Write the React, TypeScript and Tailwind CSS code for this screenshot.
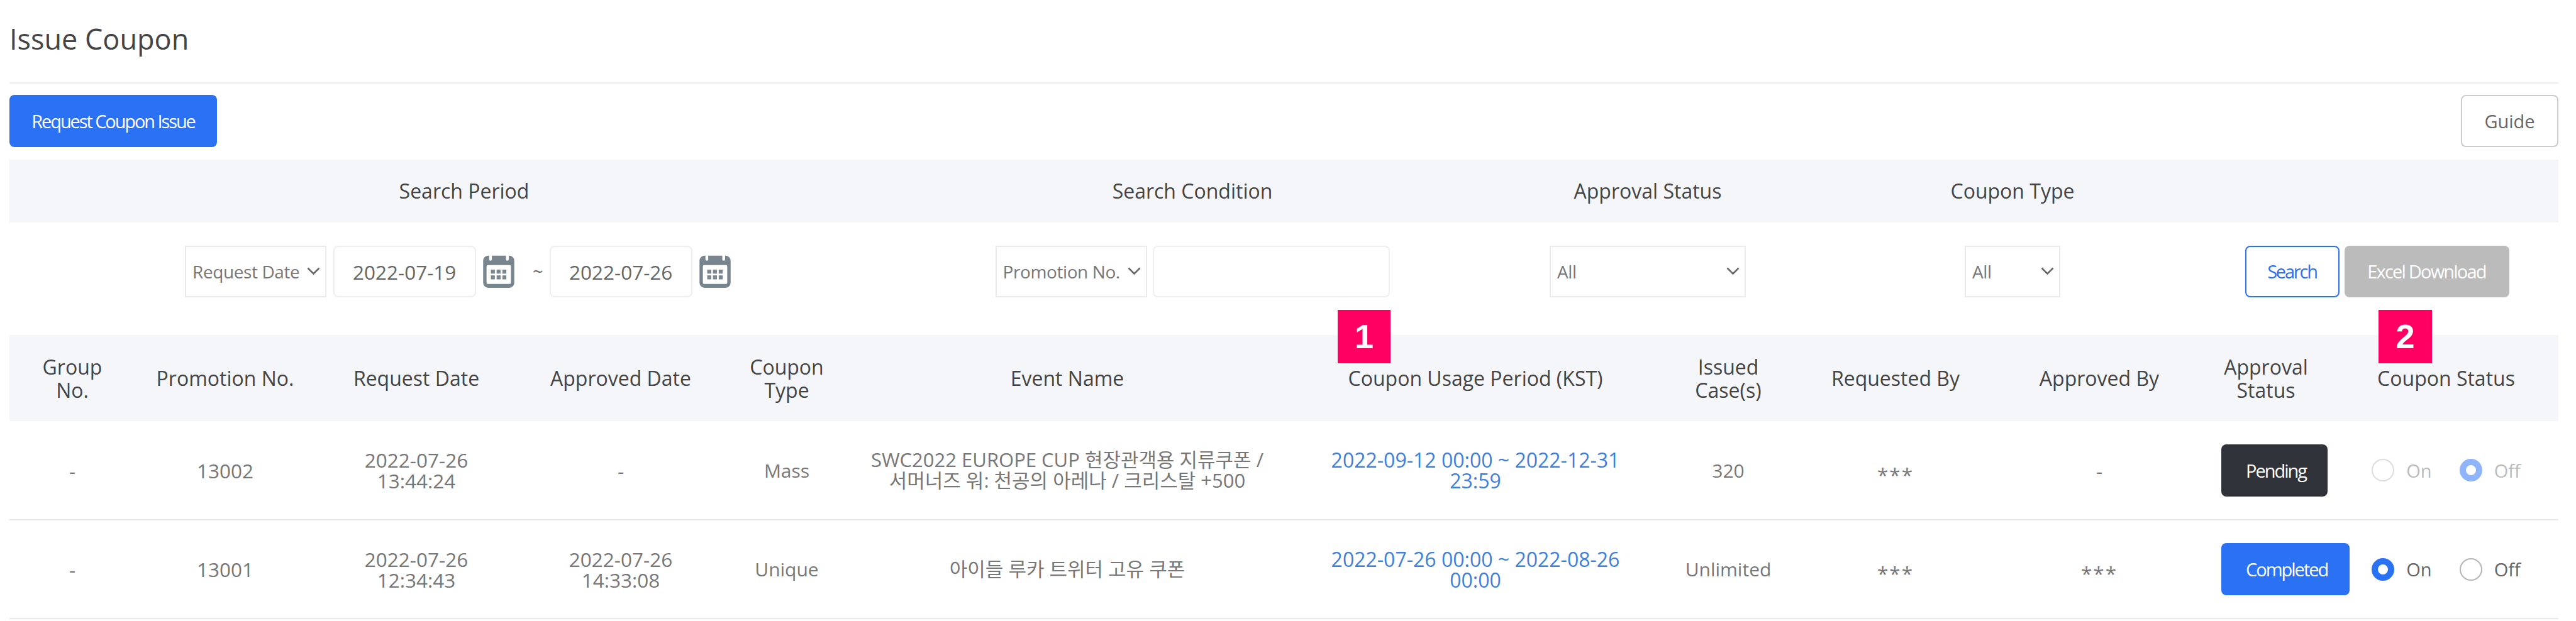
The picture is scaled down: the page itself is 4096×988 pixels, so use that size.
import { Fragment } from "react";

const font = "font-['Open_Sans','Noto_Sans_CJK_KR',sans-serif]";

function CalendarIcon() {
  return (
    <svg viewBox="0 0 157 165" className="w-[50px] h-[52px] shrink-0" aria-hidden="true">
      <rect x="0" y="2" width="157" height="163" rx="26" fill="#78848e" />
      <rect x="30" y="-8" width="14" height="36" rx="7" fill="#fff" />
      <rect x="115" y="-8" width="14" height="36" rx="7" fill="#fff" />
      <rect x="17" y="50" width="123" height="95" rx="6" fill="#fff" />
      {[39, 68, 97].flatMap((x) =>
        [73, 102].map((y) => <rect key={`${x}-${y}`} x={x} y={y} width="20" height="20" fill="#78848e" />),
      )}
    </svg>
  );
}

function Radio({ checked, dim, label }: { checked: boolean; dim: boolean; label: string }) {
  const circle = checked
    ? dim
      ? "border-[10px] border-[#8fb4fb]"
      : "border-[10px] border-[#2b71f4]"
    : dim
      ? "border-2 border-[#dddddd]"
      : "border-2 border-[#b5b5b5]";
  return (
    <span className="flex items-center gap-[19px]">
      <span className={`h-[36px] w-[36px] rounded-full bg-white ${circle}`} />
      <span className={`text-[29px] ${dim ? "text-[#bbbbbb]" : "text-[#666666]"}`}>{label}</span>
    </span>
  );
}

function SelectBox({ value, className }: { value: string; className: string }) {
  return (
    <span className={`relative block h-[82px] ${className}`}>
      <select
        defaultValue={value}
        className="h-[82px] w-full appearance-none border-2 border-[#eaeaea] bg-white pl-[10px] text-[28px] tracking-[-0.4px] text-[#777777]"
      >
        <option>{value}</option>
      </select>
      <svg viewBox="0 0 21 13" className="pointer-events-none absolute right-[10px] top-[34px] h-[13px] w-[21px]" aria-hidden="true">
        <path d="M1.5 1.5 L10.5 10.5 L19.5 1.5" fill="none" stroke="#666666" strokeWidth="2.6" />
      </svg>
    </span>
  );
}

function Stars() {
  return <span className="inline-block translate-y-[6px] tracking-[2px]">***</span>;
}

function Lines({ items }: { items: string[] }) {
  return (
    <>
      {items.map((t, i) => (
        <Fragment key={t}>
          {i > 0 && <br />}
          {t}
        </Fragment>
      ))}
    </>
  );
}

const columns = ["w-[200px]", "w-[286px]", "w-[322px]", "w-[328px]", "w-[200px]", "w-[692px]", "w-[606px]", "w-[198px]", "w-[334px]", "w-[314px]", "w-[216px]", "w-[357px]"];

const heads = ["Group\nNo.", "Promotion No.", "Request Date", "Approved Date", "Coupon\nType", "Event Name", "Coupon Usage Period (KST)", "Issued\nCase(s)", "Requested By", "Approved By", "Approval\nStatus", "Coupon Status"];

const rows = [
  {
    group: "-",
    promo: "13002",
    req: ["2022-07-26", "13:44:24"],
    appr: ["-"],
    type: "Mass",
    event: "SWC2022 EUROPE CUP 현장관객용 지류쿠폰 / 서머너즈 워: 천공의 아레나 / 크리스탈 +500",
    usage: "2022-09-12 00:00 ~ 2022-12-31 23:59",
    issued: "320",
    apBy: false,
    status: "Pending",
    statusCls: "bg-[#30323a] w-[169px]",
    on: false,
    dim: true,
  },
  {
    group: "-",
    promo: "13001",
    req: ["2022-07-26", "12:34:43"],
    appr: ["2022-07-26", "14:33:08"],
    type: "Unique",
    event: "아이들 루카 트위터 고유 쿠폰",
    usage: "2022-07-26 00:00 ~ 2022-08-26 00:00",
    issued: "Unlimited",
    apBy: true,
    status: "Completed",
    statusCls: "bg-[#2b71f4] w-[204px]",
    on: true,
    dim: false,
  },
];

export default function App() {
  return (
    <div className={`relative h-[988px] w-[4096px] overflow-hidden bg-white pl-[15px] pr-[28px] ${font}`}>
      <div className="flex h-[133px] items-center border-b-2 border-[#ececec] pb-[7px]">
        <h1 className="text-[45px] text-[#444444]">Issue Coupon</h1>
      </div>

      <div className="mt-[18px] flex h-[83px] items-center justify-between">
        <button className="h-[83px] w-[330px] rounded-[8px] bg-[#2b71f4] text-[29px] tracking-[-2.1px] text-white">
          Request Coupon Issue
        </button>
        <button className="h-[83px] w-[155px] rounded-[8px] border-2 border-[#cccccc] bg-white text-[29px] text-[#666666]">
          Guide
        </button>
      </div>

      <div className="mt-[20px] grid h-[100px] grid-cols-[1446px_870px_578px_582px_577px] items-center bg-[#f4f6fa] text-center text-[32px] text-[#444444]">
        <div>Search Period</div>
        <div>Search Condition</div>
        <div>Approval Status</div>
        <div>Coupon Type</div>
        <div />
      </div>

      <div className="mt-[37px] grid h-[82px] grid-cols-[1446px_870px_578px_582px_577px] items-center">
        <div className="flex items-center justify-center gap-[11px] pr-[20px]">
          <SelectBox value="Request Date" className="w-[225px]" />
          <input readOnly defaultValue="2022-07-19" className="h-[82px] w-[227px] rounded-[8px] border-2 border-[#eeeeee] bg-white px-[29px] text-[31.5px] text-[#666666]" />
          <CalendarIcon />
          <span className="ml-[18px] w-[16px] text-[29px] text-[#666666]">~</span>
          <input readOnly defaultValue="2022-07-26" className="h-[82px] w-[227px] rounded-[8px] border-2 border-[#eeeeee] bg-white px-[29px] text-[31.5px] text-[#666666]" />
          <CalendarIcon />
        </div>
        <div className="flex items-center justify-center gap-[9px]">
          <SelectBox value="Promotion No." className="w-[241px]" />
          <input readOnly className="h-[82px] w-[377px] rounded-[8px] border-2 border-[#eeeeee] bg-white" />
        </div>
        <div className="flex justify-center">
          <SelectBox value="All" className="w-[312px]" />
        </div>
        <div className="flex justify-center">
          <SelectBox value="All" className="w-[152px]" />
        </div>
        <div className="flex items-center justify-center gap-[8px]">
          <button className="h-[82px] w-[150px] rounded-[8px] border-2 border-[#2b71f4] bg-white text-[29px] tracking-[-2.2px] text-[#2b71f4]">Search</button>
          <button className="h-[82px] w-[262px] rounded-[8px] bg-[#bbbbbb] text-[29px] tracking-[-1.8px] text-white">Excel Download</button>
        </div>
      </div>

      <table className="mt-[60px] w-full table-fixed border-collapse text-center">
        <colgroup>
          {columns.map((c, i) => (
            <col key={i} className={c} />
          ))}
        </colgroup>
        <thead>
          <tr className="h-[137px] bg-[#f4f6fa] text-[32px] leading-[37px] text-[#444444]">
            {heads.map((h) => (
              <th key={h} className="whitespace-pre-line font-normal">
                {h}
              </th>
            ))}
          </tr>
        </thead>
        <tbody className="text-[31.5px] leading-[33px] text-[#777777]">
          {rows.map((r) => (
            <tr key={r.promo} className="h-[157px] border-b-2 border-[#e8e8e8]">
              <td>{r.group}</td>
              <td>{r.promo}</td>
              <td><Lines items={r.req} /></td>
              <td><Lines items={r.appr} /></td>
              <td className="text-[30px]">{r.type}</td>
              <td className="px-[30px] text-[31px]">{r.event}</td>
              <td className="px-[70px] text-[32px] text-[#3f80d8]">{r.usage}</td>
              <td className="text-[30px]">{r.issued}</td>
              <td><Stars /></td>
              <td>{r.apBy ? <Stars /> : "-"}</td>
              <td className="pl-[37px]">
                <div className={`flex h-[83px] items-center rounded-[8px] pl-[39px] text-[29px] tracking-[-2px] text-white ${r.statusCls}`}>
                  {r.status}
                </div>
              </td>
              <td>
                <div className="flex items-center justify-center gap-[44px]">
                  <Radio checked={r.on} dim={r.dim} label="On" />
                  <Radio checked={!r.on} dim={r.dim} label="Off" />
                </div>
              </td>
            </tr>
          ))}
        </tbody>
      </table>

      <div className="absolute left-[2127px] top-[493px] flex h-[85px] w-[84px] items-center justify-center bg-[#ff0062] font-['Liberation_Sans_Narrow','Liberation_Sans',sans-serif] text-[54px] font-bold text-white">1</div>
      <div className="absolute left-[3782px] top-[493px] flex h-[85px] w-[85px] items-center justify-center bg-[#ff0062] font-['Liberation_Sans_Narrow','Liberation_Sans',sans-serif] text-[54px] font-bold text-white">2</div>
    </div>
  );
}
